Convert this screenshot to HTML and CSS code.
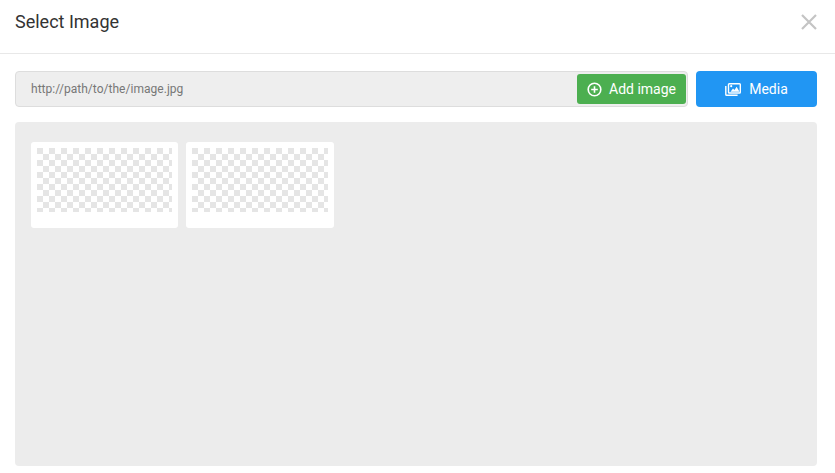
FILE: index.html
```html
<!DOCTYPE html>
<html lang="en">
<head>
<meta charset="utf-8">
<title>Select Image</title>
<link rel="stylesheet" href="styles.css">
</head>
<body>
<div class="dialog">
  <header class="head">
    <h1 class="title">Select Image</h1>
    <button class="close" aria-label="Close">
      <svg class="close-icon" viewBox="0 0 16 16"><path d="M1 1 15 15M15 1 1 15"/></svg>
    </button>
  </header>
  <div class="body">
    <div class="toolbar">
      <div class="url">
        <span class="url-text">http://path/to/the/image.jpg</span>
        <button class="btn btn-add">
          <svg class="icon" viewBox="0 0 15 15"><circle cx="7.500" cy="7.500" r="6.300"/><path d="M7.500 4.200v6.600M4.200 7.500h6.600"/></svg>
          Add image
        </button>
      </div>
      <button class="btn btn-media">
        <svg class="icon icon-media" viewBox="0 0 16 13"><rect x="3.500" y="0.700" width="11.800" height="9.300" rx="0.800"/><path d="M0.800 3v8.500c0 .5.300.8.800.8h11"/><path class="fill" d="M5.500 8.800 8 5.500l1.500 1.500 2.100-3.300 2.900 5.100Z"/><circle class="fill" cx="6.200" cy="3.200" r="1.100"/></svg>
        Media
      </button>
    </div>
    <div class="gallery">
      <div class="card first">
        <svg class="thumb"><defs><pattern id="checker" width="12" height="12" patternUnits="userSpaceOnUse"><rect class="sq" width="6" height="6"/><rect class="sq" x="6" y="6" width="6" height="6"/></pattern></defs><rect width="100%" height="100%" fill="url(#checker)"/></svg>
      </div>
      <div class="card">
        <svg class="thumb"><rect width="100%" height="100%" fill="url(#checker)"/></svg>
      </div>
    </div>
  </div>
</div>
</body>
</html>
```
FILE: styles.css
```css
* { box-sizing: border-box; }
html, body { margin: 0; height: 100%; }
body { background: #fff; font-family: Roboto, "Liberation Sans", sans-serif; overflow: hidden; }
.dialog { width: 835px; height: 473px; display: flex; flex-direction: column; }
.head {
  height: 54px;
  flex: none;
  display: flex;
  align-items: flex-start;
  justify-content: space-between;
  padding: 0 18px 0 15px;
  border-bottom: 1px solid #e8e8e8;
}
.title { margin: 11px 0 0; font-size: 18px; line-height: 22px; font-weight: 400; color: #333; }
.close { border: 0; background: none; padding: 0; margin-top: 14px; width: 16px; height: 16px; display: block; }
.close-icon { display: block; width: 16px; height: 16px; fill: none; stroke: #c4c4c4; stroke-width: 2.200; }
.body { flex: 1; display: flex; flex-direction: column; padding: 17px 18px 7px 15px; gap: 15px; min-height: 0; }
.toolbar { display: flex; gap: 8px; height: 36px; flex: none; }
.url {
  flex: 1;
  display: flex;
  align-items: center;
  justify-content: space-between;
  padding: 0 1px 0 15px;
  background: #eee;
  border: 1px solid #ddd;
  border-radius: 4px;
}
.url-text { font-size: 12px; color: #777; font-weight: 400; letter-spacing: .03px; }
.btn {
  border: 0;
  color: #fff;
  font-family: inherit;
  font-size: 14px;
  display: flex;
  align-items: center;
  justify-content: center;
  border-radius: 3px;
  padding: 0;
}
.btn-add { width: 109px; height: 30px; background: #4caf50; gap: 7px; }
.btn-media { width: 121px; background: #2196f3; gap: 8px; border-radius: 4px; }
.icon { width: 15px; height: 15px; fill: none; stroke: #fff; stroke-width: 1.600; display: block; }
.icon-media { width: 16px; height: 13px; stroke-width: 1.400; }
.fill { fill: #fff; stroke: none; }
.gallery {
  flex: 1;
  display: flex;
  align-items: flex-start;
  gap: 8px;
  padding: 20px 16px;
  background: #ececec;
  border-radius: 4px;
}
.card { width: 148px; height: 86px; padding: 6px; background: #fff; border-radius: 3px; }
.card.first { width: 147px; }
.thumb { display: block; width: 100%; height: 64px; }
.sq { fill: #e5e5e5; shape-rendering: crispEdges; }
```
